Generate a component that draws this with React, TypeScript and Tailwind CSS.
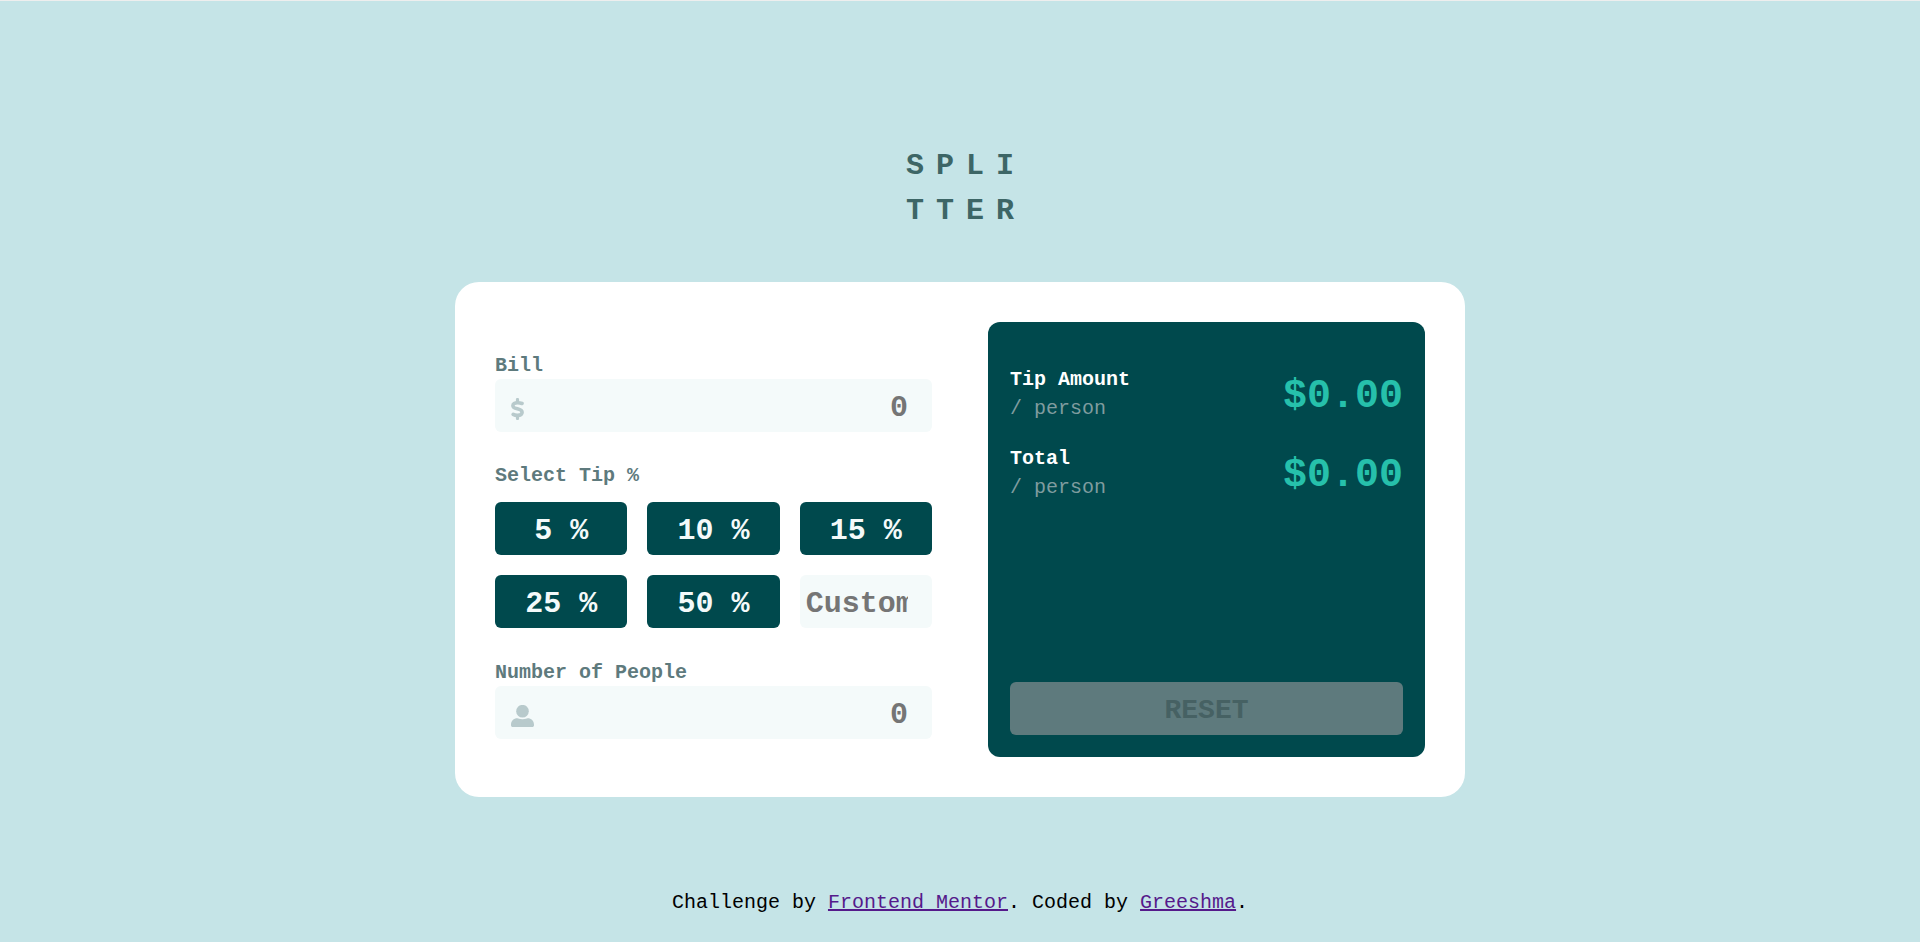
import { useState } from "react";

const TIPS = [5, 10, 15, 25, 50];

const field =
  "h-[53px] w-full min-w-0 rounded-md bg-[#f4fafa] pt-1 text-right text-[30px] font-bold text-[#00494d] placeholder:text-[#757575] placeholder:opacity-100 outline-[#26c0ab]";

function DollarIcon() {
  return (
    <svg
      viewBox="0 0 13 22"
      className="pointer-events-none absolute top-[19px] left-4 h-[22px] w-[13px]"
      fill="none"
      stroke="#b8cacc"
      strokeLinecap="round"
      aria-hidden="true"
    >
      <path d="M6.5 1.500V4M6.500 18v2.500" strokeWidth="3.200" />
      <path
        d="M11 5.500C9.600 4.900 8.200 4.700 6.600 4.700C3.600 4.700 1.900 5.800 1.900 7.700C1.900 11.800 11.100 9.800 11.100 14.200C11.100 16.200 9.300 17.400 6.300 17.400C4.600 17.400 3.200 17 2.200 16.400"
        strokeWidth="3.600"
      />
    </svg>
  );
}

function PersonIcon() {
  return (
    <svg
      viewBox="0 0 23 22"
      className="pointer-events-none absolute top-[19px] left-4 h-[22px] w-[23px]"
      fill="#b8cacc"
      aria-hidden="true"
    >
      <circle cx="11.5" cy="6.2" r="6.3" />
      <path d="M6.4 13.2C7.5 13.2 8.2 14.2 11.5 14.2S15.500 13.2 16.600 13.2C20.300 13.2 23 15.900 23 19.500V20.200C23 21.300 22.300 22 21.200 22H1.800C.7 22 0 21.300 0 20.200V19.500C0 15.900 2.700 13.200 6.400 13.200Z" />
    </svg>
  );
}

function Result({ title, amount }: { title: string; amount: number }) {
  return (
    <div className="flex items-center justify-between">
      <div className="text-xl leading-[29px]">
        <h2 className="font-bold text-white">{title}</h2>
        <p className="text-[#7f9c9f]">/ person</p>
      </div>
      <output className="pt-1.5 text-[40px] leading-[52px] font-bold text-[#26c0ab]">
        ${amount.toFixed(2)}
      </output>
    </div>
  );
}

export default function App() {
  const [bill, setBill] = useState("");
  const [people, setPeople] = useState("");
  const [custom, setCustom] = useState("");
  const [tip, setTip] = useState(0);

  const count = Number(people);
  const total = Number(bill) || 0;
  const rate = Number(custom) || tip;
  const tipEach = count > 0 ? (total * rate) / 100 / count : 0;
  const totalEach = count > 0 ? total / count + tipEach : 0;
  const untouched = !bill && !people && !custom && !tip;

  const reset = () => {
    setBill("");
    setPeople("");
    setCustom("");
    setTip(0);
  };

  return (
    <div className="flex min-h-screen flex-col items-center border-t border-[#eeeeee] bg-[#c5e4e7] px-4 pt-[143px] font-['Liberation_Mono',monospace]">
      <h1 className="pl-3 text-[30px] leading-[45px] font-bold tracking-[12px] text-[#3d6666]">
        SPLI
        <br />
        TTER
      </h1>

      <main className="mt-12 grid w-full max-w-[1010px] gap-14 rounded-3xl bg-white p-10 md:grid-cols-2">
        <form
          className="flex flex-col gap-[33px] pt-[33px] pb-[18px] text-xl leading-[22px] font-bold text-[#5e7a7d]"
          onSubmit={(e) => e.preventDefault()}
        >
          <div>
            <label htmlFor="bill" className="block pb-0.5">
              Bill
            </label>
            <div className="relative">
              <DollarIcon />
              <input
                id="bill"
                inputMode="decimal"
                placeholder="0"
                value={bill}
                onChange={(e) => setBill(e.target.value)}
                className={`${field} pr-6 pl-12`}
              />
            </div>
          </div>

          <fieldset className="pb-px">
            <legend className="mb-[15px]">Select Tip %</legend>
            <div className="grid grid-cols-3 gap-5">
              {TIPS.map((value) => (
                <button
                  key={value}
                  type="button"
                  onClick={() => setTip(value)}
                  className="h-[53px] rounded-md bg-[#00494d] pt-1 text-[30px] text-[#f4fafa] hover:bg-[#26c0ab]"
                >
                  {value} %
                </button>
              ))}
              <input
                aria-label="Custom tip percentage"
                inputMode="decimal"
                placeholder="Custom"
                value={custom}
                onChange={(e) => setCustom(e.target.value)}
                className={`${field} pr-6 pl-1.5`}
              />
            </div>
          </fieldset>

          <div>
            <label htmlFor="people" className="block pb-0.5">
              Number of People
            </label>
            <div className="relative">
              <PersonIcon />
              <input
                id="people"
                inputMode="numeric"
                placeholder="0"
                value={people}
                onChange={(e) => setPeople(e.target.value)}
                className={`${field} pr-6 pl-12`}
              />
            </div>
          </div>
        </form>

        <section className="flex flex-col gap-[21px] rounded-xl bg-[#00494d] px-[22px] pt-[43px] pb-[22px]">
          <Result title="Tip Amount" amount={tipEach} />
          <Result title="Total" amount={totalEach} />
          <button
            type="button"
            disabled={untouched}
            onClick={reset}
            className="mt-auto h-[53px] rounded-md bg-[#26c0ab] pt-1 text-[28px] font-bold text-[#00494d] disabled:bg-[#5e7a7d] disabled:text-[#466163]"
          >
            RESET
          </button>
        </section>
      </main>

      <footer className="mt-[91px] text-center text-xl leading-[30px] text-black">
        Challenge by{" "}
        <a href="https://www.frontendmentor.io" className="text-[#551a8b] underline">
          Frontend Mentor
        </a>
        . Coded by{" "}
        <a href="#greeshma" className="text-[#551a8b] underline">
          Greeshma
        </a>
        .
      </footer>
    </div>
  );
}
